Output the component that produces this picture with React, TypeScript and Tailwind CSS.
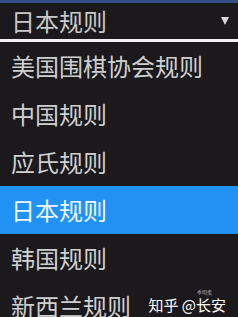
import React from 'react';

const rules = ['美国围棋协会规则', '中国规则', '应氏规则', '日本规则', '韩国规则', '新西兰规则'];

const App: React.FC = () => {
  const selected = '日本规则';

  return (
    <div
      className="relative w-[238px] h-[317px] overflow-hidden bg-[#1b191c]"
      style={{ fontFamily: '"Noto Sans CJK SC", "Noto Sans", sans-serif' }}
    >
      <div className="h-[3px] bg-[#34508a]" />

      {/* select box */}
      <div className="h-[36px] flex items-center justify-between pl-[11px] pr-[9px]">
        <span className="text-[24px] leading-none text-[#c9c9c9]">{selected}</span>
        <svg width="8" height="8" viewBox="0 0 8 8">
          <path d="M0 0h8L4 8z" fill="#d8d8d8" />
        </svg>
      </div>
      <div className="h-[3px] bg-[#f2f2f2]" />

      {/* options */}
      <ul>
        {rules.map((r, i) => (
          <li
            key={r}
            className={
              'h-[48px] flex items-center pl-[11px] text-[24px] leading-none ' +
              (i === 3 ? 'bg-[#2192f4] text-[#eef7ff]' : 'text-[#cfcfcf]')
            }
          >
            {r}
          </li>
        ))}
      </ul>

      {/* watermark */}
      <div className="absolute right-[12px] bottom-[5px] flex items-end text-white">
        <span className="text-[15px] leading-none">知乎 @</span>
        <span className="relative text-[15px] leading-none">
          长安
          <span className="absolute -top-[8px] left-[1px] text-[5px] leading-none text-[#aaaaaa] whitespace-nowrap">
            季明柔
          </span>
        </span>
      </div>
    </div>
  );
};

export default App;
